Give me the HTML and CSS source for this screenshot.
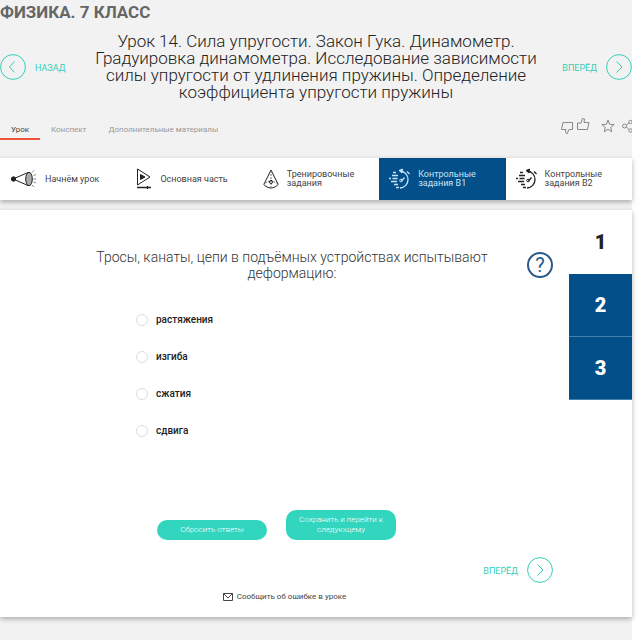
FILE: index.html
```html
<!DOCTYPE html>
<html lang="ru">
<head>
  <meta charset="UTF-8">
  <meta name="viewport" content="width=device-width, initial-scale=1.0">
  <title>Физика. 7 класс</title>
  <link rel="stylesheet" href="styles.css">
</head>
<body>
  <div class="page">
    <h1 class="subject">ФИЗИКА. 7 КЛАСС</h1>

    <header class="lesson-header">
      <a class="step-link" href="#">
        <svg class="step-icon" viewBox="0 0 26 26"><circle cx="13" cy="13" r="12.4"/><path d="M14.500 7.500L9.500 13l5 5.500"/></svg>
        <span>НАЗАД</span>
      </a>
      <h2 class="lesson-title">Урок 14. Сила упругости. Закон Гука. Динамометр. Градуировка динамометра. Исследование зависимости силы упругости от удлинения пружины. Определение коэффициента упругости пружины</h2>
      <a class="step-link step-next" href="#">
        <span>ВПЕРЁД</span>
        <svg class="step-icon" viewBox="0 0 26 26"><circle cx="13" cy="13" r="12.4"/><path d="M10.500 7.500l5.500 5.500-5.500 5.500"/></svg>
      </a>
    </header>

    <div class="toolbar">
      <nav class="tabs">
        <a class="tab active" href="#">Урок</a>
        <a class="tab" href="#">Конспект</a>
        <a class="tab" href="#">Дополнительные материалы</a>
      </nav>
      <div class="actions">
        <button class="action action-low" type="button" aria-label="Не нравится">
          <svg viewBox="0 0 14 14"><path d="M3 1.500h9.500V8.500H9L7 13l-1.500-1.500.5-3H1.500z"/></svg>
        </button>
        <button class="action action-high" type="button" aria-label="Нравится">
          <svg viewBox="0 0 14 14"><path d="M1.500 12.500V6H5l1.500-4.500L8.500 2 8 5.500h5l-1.500 7z"/></svg>
        </button>
        <button class="action action-star" type="button" aria-label="В избранное">
          <svg viewBox="0 0 14 14"><path d="M7 1l1.600 4.300 4.600.2-3.600 2.900 1.200 4.400L7 10.300l-3.800 2.500 1.200-4.400L.8 5.500l4.600-.2z"/></svg>
        </button>
        <button class="action action-share" type="button" aria-label="Поделиться">
          <svg viewBox="0 0 14 14"><circle cx="2.500" cy="7" r="2"/><circle cx="8.500" cy="3" r="1.700"/><circle cx="8.500" cy="11.500" r="1.700"/><path d="M4.500 6l2.500-2M4.500 8l2.500 2.500"/></svg>
        </button>
      </div>
    </div>

    <nav class="sections">
      <a class="section" href="#">
        <svg class="section-icon icon-wide" viewBox="0 0 27 22">
          <path d="M3 11L18 4.500M3 11l15 6.500"/><ellipse class="fill-grey" cx="19" cy="11" rx="3.300" ry="6.700"/><circle class="fill-ink" cx="3.500" cy="11" r="2.200"/><path class="faint" d="M22 4.500l2-2M23.500 7.500l2.500-1M23.500 11h2.500M23.500 14l2.500 1M22 17l2 2"/>
        </svg>
        <span>Начнём урок</span>
      </a>
      <a class="section" href="#">
        <svg class="section-icon icon-narrow" viewBox="0 0 16 22">
          <path d="M1.500 1v16L14 9z"/><path class="fill-ink" d="M4.500 6.500v5L9 9z"/><path class="heavy" d="M1 19.500h14M11.500 18v3"/>
        </svg>
        <span>Основная часть</span>
      </a>
      <a class="section" href="#">
        <svg class="section-icon icon-narrow" viewBox="0 0 16 22">
          <path d="M8 2L.8 16.500C3 18.500 5 20 8 20s5-1.500 7.200-3.500z"/><path class="dashed" d="M8 3v16M2 15l6-2.500 6 2.500"/><circle cx="8" cy="14" r="1.500"/>
        </svg>
        <span>Тренировочные задания</span>
      </a>
      <a class="section active" href="#">
        <svg class="section-icon" viewBox="0 0 21 22">
          <path class="heavy" d="M11 3a8.300 8.300 0 0 1 8 8.500 8.300 8.300 0 0 1-8 8.500"/><path class="fill-ink" d="M13.500 1L10 2.500l3 2.500z"/><path class="heavy" d="M18 3.500l2.500 2.500M4 4.500h3M3 7.500h6M0 10.500h2M3.500 10.500h5M2 13.500h6M5 16.500h4M7 19.500h3M12.500 13l3-3.500"/><circle cx="12" cy="12.500" r="1.300"/>
        </svg>
        <span>Контрольные задания В1</span>
      </a>
      <a class="section" href="#">
        <svg class="section-icon" viewBox="0 0 21 22">
          <path class="heavy" d="M11 3a8.300 8.300 0 0 1 8 8.500 8.300 8.300 0 0 1-8 8.500"/><path class="fill-ink" d="M13.500 1L10 2.500l3 2.500z"/><path class="heavy" d="M18 3.500l2.500 2.500M4 4.500h3M3 7.500h6M0 10.500h2M3.500 10.500h5M2 13.500h6M5 16.500h4M7 19.500h3M12.500 13l3-3.500"/><circle cx="12" cy="12.500" r="1.300"/>
        </svg>
        <span>Контрольные задания В2</span>
      </a>
    </nav>

    <main class="card">
      <form class="exercise">
        <div class="question-row">
          <p class="question" id="question">Тросы, канаты, цепи в подъёмных устройствах испытывают деформацию:</p>
          <button class="help" type="button" aria-label="Помощь">?</button>
        </div>
        <div class="answers" role="radiogroup" aria-labelledby="question">
          <label class="answer"><input type="radio" name="answer">растяжения</label>
          <label class="answer"><input type="radio" name="answer">изгиба</label>
          <label class="answer"><input type="radio" name="answer">сжатия</label>
          <label class="answer"><input type="radio" name="answer">сдвига</label>
        </div>
        <div class="buttons">
          <button class="btn" type="reset">Сбросить ответы</button>
          <button class="btn" type="button">Сохранить и перейти к следующему</button>
        </div>
        <a class="step-link step-next step-bottom" href="#">
          <span>ВПЕРЁД</span>
          <svg class="step-icon" viewBox="0 0 26 26"><circle cx="13" cy="13" r="12.4"/><path d="M10.500 7.500l5.500 5.500-5.500 5.500"/></svg>
        </a>
        <a class="report" href="#">
          <svg class="mail-icon" viewBox="0 0 10 8"><path d="M.5 .5h9v7h-9zM.5 .5L5 5l4.500-4.500"/></svg>
          <span>Сообщить об ошибке в уроке</span>
        </a>
      </form>
      <nav class="pager">
        <a class="pager-item active" href="#">1</a>
        <a class="pager-item" href="#">2</a>
        <a class="pager-item" href="#">3</a>
      </nav>
    </main>
  </div>
</body>
</html>
```
FILE: styles.css
```css
* {
  box-sizing: border-box;
}

body {
  margin: 0;
  padding-right: 8px;
  background-color: #fff;
  color: #444;
  font-family: Roboto, "Noto Sans", sans-serif;
  font-size: 8px;
}

a {
  color: inherit;
  text-decoration: none;
}

button {
  font-family: inherit;
  cursor: pointer;
}

svg {
  display: block;
  fill: none;
  stroke: currentColor;
}

.page {
  min-height: 100vh;
  padding-bottom: 22px;
  background-color: #f2f2f2;
}

.subject {
  margin: 0;
  padding-top: 2px;
  font-size: 17px;
  line-height: 20px;
  color: #666;
}

/* Lesson title with the arrows */
.lesson-header {
  display: grid;
  grid-template-columns: 1fr minmax(0, 448px) 1fr;
  align-items: center;
  padding-top: 11px;
}

.lesson-title {
  margin: 0;
  font-size: 17px;
  font-weight: 300;
  line-height: 17px;
  text-align: center;
  color: #222;
}

.step-link {
  display: flex;
  align-items: center;
  gap: 9px;
  font-size: 9px;
  line-height: 12px;
  color: #35cdb6;
}

.step-link span {
  padding-top: 2px;
}

.step-next {
  justify-content: flex-end;
}

.step-icon {
  width: 26px;
  height: 26px;
}

/* Tabs */
.toolbar {
  display: flex;
  justify-content: space-between;
  align-items: flex-end;
  height: 39px;
}

.tabs {
  display: flex;
}

.tab {
  padding: 0 11px;
  border-bottom: 2px solid transparent;
  line-height: 16px;
  color: #999;
}

.tab.active {
  border-color: #f0533a;
  color: #444;
}

.actions {
  display: flex;
  align-items: center;
  gap: 2px;
  padding-bottom: 5px;
  overflow: hidden;
}

.action {
  width: 14px;
  height: 14px;
  padding: 0;
  border: none;
  background: none;
  color: #888;
}

.action-low {
  margin-top: 4px;
}

.action-high {
  margin-bottom: 4px;
}

.action-star {
  margin-left: 9px;
}

.action-share {
  margin-left: 5px;
  margin-right: -4px;
}

/* Lesson sections */
.sections {
  display: grid;
  grid-template-columns: repeat(5, 1fr);
  margin-top: 18px;
  background-color: #fff;
  box-shadow: 0 2px 5px rgba(0, 0, 0, 0.3);
}

.section {
  display: flex;
  align-items: center;
  gap: 8px;
  height: 42px;
  padding-left: 10px;
  font-size: 9px;
  line-height: 9px;
}

.section.active {
  background-color: #034f89;
  color: #c4e4fb;
}

.section-icon {
  flex: none;
  width: 21px;
  height: 22px;
  color: #222;
}

.active .section-icon {
  color: #c4e4fb;
}

.icon-wide {
  width: 27px;
}

.icon-narrow {
  width: 16px;
}

.fill-grey {
  fill: #aaa;
}

.fill-ink {
  fill: currentColor;
}

.faint {
  stroke: #888;
}

.heavy {
  stroke-width: 1.3;
}

.dashed {
  stroke: #777;
  stroke-dasharray: 2 1;
}

/* Exercise */
.card {
  display: flex;
  margin-top: 10px;
  background-color: #fff;
  box-shadow: 0 2px 5px rgba(0, 0, 0, 0.3);
}

.exercise {
  flex: 1;
  padding: 39px 16px 14px;
}

.question-row {
  display: flex;
  justify-content: space-between;
  align-items: center;
  padding-left: 56px;
}

.question {
  flex: 1;
  max-width: 440px;
  margin: 0;
  padding: 0 20px;
  font-size: 14px;
  font-weight: 300;
  line-height: 16px;
  text-align: center;
  color: #333;
}

.help {
  width: 26px;
  height: 26px;
  padding: 0;
  border: 2px solid #2b5a88;
  border-radius: 50%;
  background: none;
  font-size: 20px;
  line-height: 22px;
  color: #2b5a88;
}

.answers {
  display: flex;
  flex-direction: column;
  gap: 21px;
  margin-top: 31px;
  padding-left: 120px;
}

.answer {
  display: flex;
  align-items: center;
  gap: 8px;
  align-self: flex-start;
  font-size: 10px;
  font-weight: 500;
  line-height: 16px;
  color: #222;
}

.answer input {
  appearance: none;
  width: 12px;
  height: 12px;
  margin: 0;
  border: 1px solid #ddd;
  border-radius: 50%;
}

.answer input:checked {
  border: 4px solid #034f89;
}

.buttons {
  display: flex;
  justify-content: center;
  align-items: flex-end;
  gap: 19px;
  margin-top: 71px;
  padding-right: 16px;
}

.btn {
  width: 110px;
  padding: 5px 8px;
  border: none;
  border-radius: 10px;
  background-color: #32d6bf;
  font-size: 8px;
  font-weight: 300;
  line-height: 10px;
  color: #fff;
}

.step-bottom {
  margin-top: 17px;
}

.report {
  display: flex;
  justify-content: center;
  align-items: center;
  gap: 4px;
  margin-top: 8px;
  line-height: 12px;
}

.mail-icon {
  width: 10px;
  height: 8px;
}

/* Task numbers */
.pager {
  width: 63px;
  padding-top: 1px;
}

.pager-item {
  display: flex;
  justify-content: center;
  align-items: center;
  height: 63px;
  border-bottom: 1px solid #4580ab;
  background-color: #034f89;
  font-size: 20px;
  font-weight: 900;
  color: #fff;
}

.pager-item.active {
  border-color: transparent;
  background-color: #fff;
  color: #222;
}
```
